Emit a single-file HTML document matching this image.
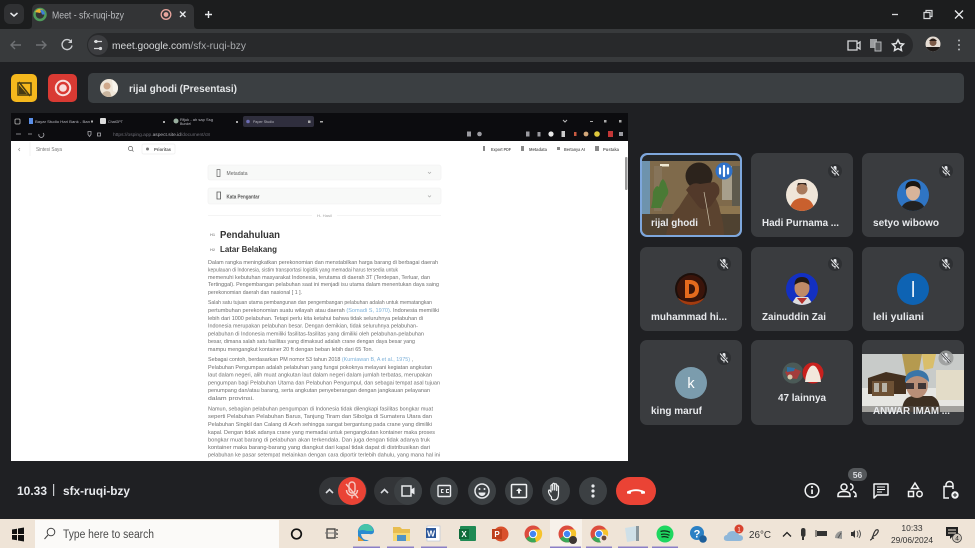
<!DOCTYPE html>
<html><head><meta charset="utf-8"><style>
html,body{margin:0;padding:0;width:975px;height:548px;overflow:hidden;background:#202124}
svg{display:block;filter:blur(.35px)}
text{font-family:"Liberation Sans",sans-serif}
.d{font-size:5.3px;fill:#6e6e6e}
.n{font-size:10.5px;font-weight:700;fill:#e8eaed}
</style></head><body>
<svg width="975" height="548" viewBox="0 0 975 548" xmlns="http://www.w3.org/2000/svg">
<defs>
<symbol id="mo" viewBox="0 0 24 24"><path d="M9 5a3 3 0 0 1 6 0v6a3 3 0 0 1-6 0z" fill="#e8eaed"/><path d="M6 11a6 6 0 0 0 12 0M12 17v4" fill="none" stroke="#e8eaed" stroke-width="2"/><path d="M4 3l16 18" stroke="#2d2f31" stroke-width="4.500"/><path d="M4 3l16 18" stroke="#e8eaed" stroke-width="2"/></symbol>
<clipPath id="c1"><rect x="642" y="155" width="98" height="80" rx="6"/></clipPath>
<clipPath id="a1"><circle cx="802" cy="195" r="16"/></clipPath>
<clipPath id="a2"><circle cx="913" cy="195" r="16"/></clipPath>
<clipPath id="a3"><circle cx="691" cy="289" r="16"/></clipPath>
<clipPath id="a4"><circle cx="802" cy="289" r="16"/></clipPath>
<clipPath id="a5"><circle cx="109" cy="88" r="9"/></clipPath>
<clipPath id="a6"><circle cx="933" cy="44" r="7.500"/></clipPath>
<clipPath id="a7"><rect x="862" y="354" width="102" height="58"/></clipPath>
</defs>

<!-- browser chrome -->
<rect width="975" height="30" fill="#1c1d1e"/>
<rect x="4" y="4" width="20" height="20" rx="6" fill="#303133"/>
<path d="M10.500 13l3.500 3 3.500-3" fill="none" stroke="#e8eaed" stroke-width="1.500"/>
<path d="M28 29q4 0 4-4V10q0-6 6-6h150q6 0 6 6v15q0 4 4 4z" fill="#333436"/>
<circle cx="40" cy="14.500" r="5.500" fill="none" stroke="#4f9a5b" stroke-width="2.500"/>
<path d="M35 12a5.500 5.500 0 0 1 6-3l2 1-3 3z" fill="#e9b32e"/><path d="M40 9.500a5 5 0 0 1 5 5h-3z" fill="#3f7fd6"/>
<text x="52" y="18.500" font-size="10" fill="#b9bbbe" textLength="72" lengthAdjust="spacingAndGlyphs">Meet - sfx-ruqi-bzy</text>
<circle cx="166" cy="14.500" r="4.800" fill="none" stroke="#e8a59d" stroke-width="1.300"/><circle cx="166" cy="14.500" r="2.400" fill="#e8a59d"/>
<path d="M180 11.500l5.500 5.500M185.500 11.500L180 17M205 14.500h7M208.500 11v7" stroke="#e8eaed" stroke-width="1.400"/>
<path d="M0 29h975v33H0z" fill="#383a3c"/>
<rect x="87" y="33" width="826" height="24" rx="12" fill="#28292b"/>
<path d="M11 45h10M15 41l-4 4 4 4M36 45h10M42 41l4 4-4 4" fill="none" stroke="#6f7174" stroke-width="1.400"/>
<path d="M71 41.500a5 5 0 1 0 1 4" fill="none" stroke="#c9cbce" stroke-width="1.400"/><path d="M72 39v4h-4z" fill="#c9cbce"/>
<circle cx="98" cy="45" r="10" fill="#3c3d40"/>
<path d="M94 41.500h8M94 48.500h8" stroke="#d6d8da" stroke-width="1.300"/><circle cx="96" cy="41.500" r="1.600" fill="#d6d8da"/><circle cx="100.500" cy="48.500" r="1.600" fill="#d6d8da"/>
<text x="112" y="49" font-size="10.500" fill="#d6d8da" textLength="134" lengthAdjust="spacingAndGlyphs">meet.google.com<tspan fill="#a9abae">/sfx-ruqi-bzy</tspan></text>
<path d="M892 14.500h6" stroke="#d6d8da" stroke-width="1.300"/>
<path d="M924 12.500h6v6h-6zM926 12.500v-2h6v6h-2" fill="none" stroke="#d6d8da" stroke-width="1.200"/>
<path d="M955 10.500l8 8M963 10.500l-8 8" stroke="#e8eaed" stroke-width="1.300"/>
<path d="M848 41h9v9h-9zM857 44l3-2v7l-3-2" fill="none" stroke="#d6d8da" stroke-width="1.300"/>
<path d="M870 39h7v9h-7z" fill="#9a9c9f"/><path d="M875 42h6v9h-6z" fill="#55575a" stroke="#b5b7ba"/>
<path d="M898 40l1.800 3.500 3.700.5-2.700 2.700.7 3.800-3.500-1.900-3.500 1.900.7-3.800-2.700-2.700 3.700-.5z" fill="none" stroke="#e0e2e4" stroke-width="1.500"/>
<circle cx="933" cy="44" r="7.500" fill="#e5dcd3"/><g clip-path="url(#a6)"><circle cx="933" cy="42.500" r="3.500" fill="#7c5a47"/><rect x="926" y="47" width="14" height="5" fill="#1f1a18"/><path d="M929 41q4-5 8 0" fill="#2a1c16"/></g>
<g fill="#b5b7ba"><circle cx="959" cy="40.500" r="1"/><circle cx="959" cy="45" r="1"/><circle cx="959" cy="49.500" r="1"/></g>

<!-- meet bg -->
<rect y="62" width="975" height="457" fill="#1f2023"/>
<rect x="11" y="74" width="26" height="28" rx="5" fill="#f5b81d"/>
<path d="M18 83h13v12H18zM19 82l11 14" fill="none" stroke="#453a13" stroke-width="1.500"/><path d="M19 85l8 9h-8z" fill="#453a13"/>
<rect x="48" y="74" width="29" height="28" rx="5" fill="#d93a33"/>
<circle cx="63" cy="88" r="7.200" fill="none" stroke="#f8dfdc" stroke-width="2"/><circle cx="63" cy="88" r="3.800" fill="#f8dfdc"/>
<rect x="88" y="73" width="876" height="30" rx="5" fill="#3b3f42"/>
<circle cx="109" cy="88" r="9" fill="#efe6d9"/><g clip-path="url(#a5)"><circle cx="107" cy="86" r="3.500" fill="#cfa88b"/><path d="M100 97q4-8 10-5l2 6z" fill="#c9b59f"/><path d="M112 79l6 6v8l-5-2z" fill="#f8f4ec"/></g>
<text x="129" y="92" font-size="10" font-weight="700" fill="#e4e6e8" textLength="108" lengthAdjust="spacingAndGlyphs">rijal ghodi (Presentasi)</text>

<!-- shared screen -->
<rect x="11" y="113" width="617" height="28" fill="#0c0c0f"/>
<rect x="243" y="116" width="71" height="11" rx="2" fill="#2f2e3d"/>
<g fill="#b9b9c0" font-size="3.800">
<text x="35" y="123" textLength="55" lengthAdjust="spacingAndGlyphs">Bayar Studio Hari Bank - Ban</text>
<text x="108" y="123" textLength="15" lengthAdjust="spacingAndGlyphs">ChatGPT</text>
<text x="180" y="121" textLength="33" lengthAdjust="spacingAndGlyphs">Rfjuk - ah sap Ssg</text>
<text x="180" y="125" textLength="11" lengthAdjust="spacingAndGlyphs">Bundel</text>
<text x="253" y="123" textLength="21" lengthAdjust="spacingAndGlyphs">Paper Studio</text>
</g>
<rect x="15" y="119" width="5" height="5" rx="1" fill="none" stroke="#bbb" stroke-width=".8"/>
<rect x="29" y="118" width="4" height="6" fill="#5b8fe8"/><rect x="100" y="118" width="6" height="6" rx="1" fill="#ddd"/><circle cx="176" cy="121" r="2.500" fill="#9ab0a0"/><circle cx="248" cy="121.500" r="1.800" fill="#6d6db5"/>
<g fill="#aaa"><rect x="91" y="120.500" width="2" height="2"/><rect x="163" y="121" width="2" height="2"/><rect x="236" y="121" width="2" height="2"/><rect x="308" y="120.500" width="2.500" height="2.500"/><rect x="320" y="121" width="3" height="1.500"/><rect x="590" y="121" width="3" height="1"/><rect x="604" y="120" width="2.500" height="2.500"/><rect x="619" y="120" width="2.500" height="2.500"/></g>
<path d="M563 120l2 2 2-2" stroke="#bbb" fill="none"/>
<g stroke="#a8a8ad" stroke-width=".8" fill="none"><path d="M16 134h5M32 134h-4M39 134a2.500 2.500 0 1 0 4-1"/><path d="M88 131.500h3v3l-1.500 2-1.500-2z"/><rect x="97.500" y="133" width="3" height="3"/></g>
<text x="113" y="136" font-size="4.600" fill="#6e6e77" textLength="97" lengthAdjust="spacingAndGlyphs">https://osping.app.<tspan fill="#b0b0b6">aspect.site.id</tspan>/document/c8</text>
<g fill="#9b9ba1"><rect x="467" y="131.500" width="4" height="5"/><circle cx="479.500" cy="134" r="2.300"/><rect x="526" y="131.500" width="3.500" height="5"/><rect x="537.500" y="132" width="3" height="4.500"/><circle cx="551" cy="134" r="2.600" fill="#e8e8e8"/><rect x="561.500" y="131" width="3.500" height="6" fill="#ccc"/><rect x="574" y="132" width="2.500" height="4" fill="#c95a40"/><circle cx="586" cy="134" r="2.400" fill="#d4a87a"/><circle cx="597" cy="134" r="2.800" fill="#e0c83c"/><rect x="608" y="131" width="5" height="6" fill="#c23636"/><rect x="619" y="132" width="4" height="4"/></g>

<rect x="11" y="141" width="617" height="320" fill="#fff"/>
<rect x="625" y="157" width="2.500" height="33" rx="1" fill="#9a9a9a"/>
<path d="M20 148l-1.500 1.500L20 151" stroke="#999" stroke-width=".7" fill="none"/>
<path d="M30 142v14" stroke="#eee" stroke-width=".7"/>
<text x="36" y="151" font-size="5.600" fill="#777" textLength="26" lengthAdjust="spacingAndGlyphs">Sintesi Saya</text>
<circle cx="130.500" cy="148.500" r="2.100" fill="none" stroke="#666" stroke-width=".7"/><path d="M132 150l1.500 1.500" stroke="#666" stroke-width=".7"/>
<rect x="142" y="144" width="33" height="10" rx="1.500" fill="#fff" stroke="#eee" stroke-width=".7"/>
<circle cx="147.500" cy="149" r="1.500" fill="#777"/><text x="154" y="151" font-size="4.600" font-weight="700" fill="#555" textLength="17" lengthAdjust="spacingAndGlyphs">Prioritas</text>
<g fill="#666" font-size="4.600" font-weight="700">
<text x="491" y="151" textLength="20" lengthAdjust="spacingAndGlyphs">Export PDF</text>
<text x="529" y="151" textLength="18" lengthAdjust="spacingAndGlyphs">Metadata</text>
<text x="564" y="151" textLength="21" lengthAdjust="spacingAndGlyphs">Bertanya AI</text>
<text x="603" y="151" textLength="16" lengthAdjust="spacingAndGlyphs">Pustaka</text>
</g>
<g fill="#888"><rect x="483" y="146" width="2" height="5"/><rect x="521" y="146" width="3" height="5"/><rect x="557" y="147" width="3" height="3"/><rect x="595" y="146" width="4" height="5"/></g>

<rect x="208" y="165" width="233" height="15" rx="2" fill="#f8f9f8" stroke="#f0f0f0" stroke-width=".6"/>
<rect x="208" y="188" width="233" height="16" rx="2" fill="#f8f9f8" stroke="#f0f0f0" stroke-width=".6"/>
<path d="M217 169.500h3v7h-3z" fill="none" stroke="#666" stroke-width=".7"/><path d="M217 192h3.500v7H217z" fill="none" stroke="#555" stroke-width=".8"/>
<text x="226.500" y="175" font-size="5.200" fill="#666" textLength="21" lengthAdjust="spacingAndGlyphs">Metadata</text>
<text x="226.500" y="198.500" font-size="5.200" fill="#555" font-weight="700" textLength="33" lengthAdjust="spacingAndGlyphs">Kata Pengantar</text>
<path d="M428 172l1.500 1.500L431 172M428 195.500l1.500 1.500 1.500-1.500" stroke="#aaa" fill="none" stroke-width=".7"/>
<path d="M208 215.500h104M337 215.500h104" stroke="#f1f1f1" stroke-width=".7"/><text x="317" y="217" font-size="3.800" fill="#a5a5a5" textLength="15" lengthAdjust="spacingAndGlyphs">H- Hasil</text>
<text x="210" y="236" font-size="4" fill="#999" font-weight="700">H1</text>
<text x="210" y="251" font-size="4" fill="#999" font-weight="700">H2</text>
<text x="220" y="238" font-size="10.500" font-weight="700" fill="#333" textLength="60" lengthAdjust="spacingAndGlyphs">Pendahuluan</text>
<text x="220" y="252" font-size="8.500" font-weight="700" fill="#333" textLength="57" lengthAdjust="spacingAndGlyphs">Latar Belakang</text>
<text class="d" x="208" y="264" textLength="230" lengthAdjust="spacingAndGlyphs">Dalam rangka meningkatkan perekonomian dan menstabilkan harga barang di berbagai daerah</text>
<text class="d" x="208" y="271.500" textLength="190" lengthAdjust="spacingAndGlyphs">kepulauan di Indonesia, sistim transportasi logistik yang memadai harus tersedia untuk</text>
<text class="d" x="208" y="279" textLength="222" lengthAdjust="spacingAndGlyphs">memenuhi kebutuhan masyarakat Indonesia, terutama di daerah 3T (Terdepan, Terluar, dan</text>
<text class="d" x="208" y="286" textLength="231" lengthAdjust="spacingAndGlyphs">Tertinggal). Pengembangan pelabuhan saat ini menjadi isu utama dalam menentukan daya saing</text>
<text class="d" x="208" y="294" textLength="94" lengthAdjust="spacingAndGlyphs">perekonomian daerah dan nasional [ 1 ].</text>
<text class="d" x="208" y="304" textLength="224" lengthAdjust="spacingAndGlyphs">Salah satu tujuan utama pembangunan dan pengembangan pelabuhan adalah untuk mematangkan</text>
<text class="d" x="208" y="312" textLength="231" lengthAdjust="spacingAndGlyphs">pertumbuhan perekonomian suatu wilayah atau daerah <tspan fill="#7cb0d8">(Somadi S, 1970)</tspan>. Indonesia memiliki</text>
<text class="d" x="208" y="320" textLength="215" lengthAdjust="spacingAndGlyphs">lebih dari 1000 pelabuhan. Tetapi perlu kita ketahui bahwa tidak seluruhnya pelabuhan di</text>
<text class="d" x="208" y="327.500" textLength="210" lengthAdjust="spacingAndGlyphs">Indonesia merupakan pelabuhan besar. Dengan demikian, tidak seluruhnya pelabuhan-</text>
<text class="d" x="208" y="335.500" textLength="216" lengthAdjust="spacingAndGlyphs">pelabuhan di Indonesia memiliki fasilitas-fasilitas yang dimiliki oleh pelabuhan-pelabuhan</text>
<text class="d" x="208" y="343" textLength="207" lengthAdjust="spacingAndGlyphs">besar, dimana salah satu fasilitas yang dimaksud adalah crane dengan daya besar yang</text>
<text class="d" x="208" y="351" textLength="165" lengthAdjust="spacingAndGlyphs">mampu mengangkut kontainer 20 ft dengan beban lebih dari 65 Ton.</text>
<text class="d" x="208" y="361" textLength="205" lengthAdjust="spacingAndGlyphs">Sebagai contoh, berdasarkan PM nomor 53 tahun 2018 <tspan fill="#7cb0d8">(Kurniawan B, A et al., 1975)</tspan> ,</text>
<text class="d" x="208" y="369" textLength="224" lengthAdjust="spacingAndGlyphs">Pelabuhan Pengumpan adalah pelabuhan yang fungsi pokoknya melayani kegiatan angkutan</text>
<text class="d" x="208" y="376.500" textLength="224" lengthAdjust="spacingAndGlyphs">laut dalam negeri, alih muat angkutan laut dalam negeri dalam jumlah terbatas, merupakan</text>
<text class="d" x="208" y="384.500" textLength="232" lengthAdjust="spacingAndGlyphs">pengumpan bagi Pelabuhan Utama dan Pelabuhan Pengumpul, dan sebagai tempat asal tujuan</text>
<text class="d" x="208" y="392" textLength="222" lengthAdjust="spacingAndGlyphs">penumpang dan/atau barang, serta angkutan penyeberangan dengan jangkauan pelayanan</text>
<text class="d" x="208" y="400" textLength="46" lengthAdjust="spacingAndGlyphs">dalam provinsi.</text>
<text class="d" x="208" y="410.500" textLength="225" lengthAdjust="spacingAndGlyphs">Namun, sebagian pelabuhan pengumpan di Indonesia tidak dilengkapi fasilitas bongkar muat</text>
<text class="d" x="208" y="418" textLength="224" lengthAdjust="spacingAndGlyphs">seperti Pelabuhan Pelabuhan Barus, Tanjung Tiram dan Sibolga di Sumatera Utara dan</text>
<text class="d" x="208" y="426" textLength="224" lengthAdjust="spacingAndGlyphs">Pelabuhan Singkil dan Calang di Aceh sehingga sangat bergantung pada crane yang dimiliki</text>
<text class="d" x="208" y="434" textLength="227" lengthAdjust="spacingAndGlyphs">kapal. Dengan tidak adanya crane yang memadai untuk pengangkutan kontainer maka proses</text>
<text class="d" x="208" y="441.500" textLength="222" lengthAdjust="spacingAndGlyphs">bongkar muat barang di pelabuhan akan terkendala. Dan juga dengan tidak adanya truk</text>
<text class="d" x="208" y="449" textLength="222" lengthAdjust="spacingAndGlyphs">kontainer maka barang-barang yang diangkut dari kapal tidak dapat di distribusikan dari</text>
<text class="d" x="208" y="456.500" textLength="232" lengthAdjust="spacingAndGlyphs">pelabuhan ke pasar setempat melainkan dengan cara diportir terlebih dahulu, yang mana hal ini</text>

<!-- tiles -->
<g fill="#3a3c3f">
<rect x="751" y="153" width="102" height="84" rx="7"/><rect x="862" y="153" width="102" height="84" rx="7"/>
<rect x="640" y="247" width="102" height="84" rx="7"/><rect x="751" y="247" width="102" height="84" rx="7"/><rect x="862" y="247" width="102" height="84" rx="7"/>
<rect x="640" y="340" width="102" height="85" rx="7"/><rect x="751" y="340" width="102" height="85" rx="7"/><rect x="862" y="340" width="102" height="85" rx="7"/>
</g>
<!-- tile 1 video -->
<rect x="640" y="153" width="102" height="84" rx="7" fill="#7ea7dc"/>
<g clip-path="url(#c1)">
<rect x="642" y="155" width="98" height="80" fill="#7f6a4b"/>
<rect x="642" y="155" width="98" height="6" fill="#25282a"/>
<rect x="642" y="161" width="8" height="60" fill="#6e93ad"/>
<rect x="660" y="164" width="9" height="2.500" fill="#efe9d4"/>
<rect x="654" y="166" width="8" height="45" fill="#86745a"/>
<path d="M651 208q2-8 2-16q3-8 6-5q1-6 4-8q3 3 4 8q3 6-1 10q-3 5-5 11z" fill="#4a7a35"/>
<rect x="722" y="166" width="12" height="34" fill="#a79f8c"/>
<rect x="732" y="166" width="8" height="50" fill="#5e5a4d"/>
<rect x="716" y="206" width="24" height="8" fill="#8d7650"/>
<rect x="642" y="214" width="98" height="21" fill="#4f4231"/>
<path d="M666 235q3-18 13-28q6-10 12-18h18q10 12 11 22q4 12 4 24z" fill="#5b432f"/>
<circle cx="699" cy="176" r="13.500" fill="#2c231c"/>
<path d="M686 190q6-9 14-6l14-2q7 3 5 12l-8 12q-8 6-13 0z" fill="#52392a"/>
<path d="M704 192q3 16 6 34" stroke="#c9bfa8" stroke-width=".7" fill="none"/>
</g>
<circle cx="724" cy="171" r="8.500" fill="#2f71c9"/><path d="M720 168.500v5M724 166v10M728 168.500v5" stroke="#fff" stroke-width="2.200" stroke-linecap="round"/>
<!-- mute icons -->
<g fill="#2e3033"><circle cx="835" cy="171" r="7"/><circle cx="946" cy="171" r="7"/><circle cx="724" cy="264" r="7"/><circle cx="835" cy="264" r="7"/><circle cx="946" cy="264" r="7"/><circle cx="724" cy="358" r="7"/></g>
<use href="#mo" x="829" y="165" width="12" height="12"/><use href="#mo" x="940" y="165" width="12" height="12"/>
<use href="#mo" x="718" y="258" width="12" height="12"/><use href="#mo" x="829" y="258" width="12" height="12"/><use href="#mo" x="940" y="258" width="12" height="12"/><use href="#mo" x="718" y="352" width="12" height="12"/>
<!-- avatars -->
<circle cx="802" cy="195" r="16" fill="#efe5d8"/><g clip-path="url(#a1)"><circle cx="802" cy="189" r="5.500" fill="#a87a5c"/><path d="M797 186q5-4 10 0l-1-3h-8z" fill="#33261f"/><path d="M789 212q2-14 13-14t13 14z" fill="#c9602e"/></g>
<circle cx="913" cy="195" r="16" fill="#2f75c4"/><g clip-path="url(#a2)"><ellipse cx="913" cy="192" rx="7" ry="8.500" fill="#d8b49a"/><path d="M905.500 190q-1-9 7.500-9t7.500 9q-3-4-7.500-4t-7.500 4z" fill="#1a1612"/><path d="M900 212q2-11 13-11t13 11z" fill="#222"/></g>
<circle cx="691" cy="289" r="16" fill="#1d0f0a"/><g clip-path="url(#a3)"><circle cx="691" cy="289" r="14" fill="#3a140a"/><path d="M685 280h6q8 1 8 9t-8 9h-6zM689 284v10q6 0 6-5t-6-5z" fill="#e56a1d" fill-rule="evenodd"/><path d="M678 298q13 8 26 0v8h-26z" fill="#a33c10"/></g>
<circle cx="802" cy="289" r="16" fill="#1330c2"/><g clip-path="url(#a4)"><ellipse cx="802" cy="288" rx="7.500" ry="9" fill="#c08b67"/><path d="M794.500 285q0-8 7.500-8t7.500 8q-4-3-7.500-3t-7.500 3z" fill="#221a15"/><path d="M790 306l6-9h12l6 9z" fill="#ddd"/><path d="M797 298l5 6 5-6z" fill="#b5312c"/></g>
<circle cx="913" cy="289" r="16" fill="#0e63b3"/><rect x="912.200" y="281" width="1.800" height="16" fill="#e3eef8"/>
<circle cx="691" cy="383" r="16" fill="#7b9cad"/><text x="691" y="388" font-size="14.500" fill="#fff" text-anchor="middle">k</text>
<circle cx="793" cy="373" r="10.500" fill="#4b5a57"/><path d="M785 372l8-4 8 3-4 8-9-1z" fill="#a33c3c"/><path d="M787 367l8 1-1 3-7 1z" fill="#2f6fa2"/><circle cx="790" cy="377" r="2.500" fill="#d7c6a9"/>
<circle cx="813" cy="373" r="11" fill="#3a3c3f"/><circle cx="813" cy="373" r="10.500" fill="#c9201d"/><path d="M805 382q1-10 5-15q3-3 6 0q4 5 5 15z" fill="#f2e7dc"/>
<!-- anwar video -->
<g clip-path="url(#a7)">
<rect x="862" y="354" width="102" height="58" fill="#c8cbc9"/>
<rect x="862" y="388" width="102" height="24" fill="#e6e6e2"/>
<path d="M902 354h20l-4 22h-12z" fill="#b59a4f"/>
<path d="M922 354h14l-3 14-9 2z" fill="#d9be6a"/>
<path d="M868 378l18-6 20 4v18h-38z" fill="#43301f"/>
<rect x="872" y="381" width="22" height="15" fill="#6d5135"/><rect x="874" y="383" width="5" height="9" fill="#b7b3a8"/><rect x="882" y="383" width="5" height="9" fill="#b7b3a8"/>
<rect x="936" y="370" width="28" height="30" fill="#e3dcc8"/>
<path d="M902 412q0-14 10-16h20q8 3 8 16z" fill="#3d2f22"/>
<ellipse cx="917" cy="385" rx="11" ry="13" fill="#b98f78"/>
<path d="M905 383q-1-12 13-13q11 1 11 12q-6-6-12-6t-12 7z" fill="#3a75a8"/>
<path d="M906 383h8v6h-8zM918 383h8v6h-8z" fill="#3e3536"/>
<path d="M862 406h102v6H862z" fill="#5e5c58" opacity=".5"/>
</g>
<circle cx="946" cy="358" r="7.500" fill="#9a9c9b" opacity=".85"/><use href="#mo" x="940" y="352" width="12" height="12"/>
<!-- names -->
<text class="n" x="651" y="226" textLength="47" lengthAdjust="spacingAndGlyphs">rijal ghodi</text>
<text class="n" x="762" y="226" textLength="77" lengthAdjust="spacingAndGlyphs">Hadi Purnama ...</text>
<text class="n" x="873" y="226" textLength="66" lengthAdjust="spacingAndGlyphs">setyo wibowo</text>
<text class="n" x="651" y="320" textLength="76" lengthAdjust="spacingAndGlyphs">muhammad hi...</text>
<text class="n" x="762" y="320" textLength="64" lengthAdjust="spacingAndGlyphs">Zainuddin Zai</text>
<text class="n" x="873" y="320" textLength="51" lengthAdjust="spacingAndGlyphs">leli yuliani</text>
<text class="n" x="651" y="414" textLength="51" lengthAdjust="spacingAndGlyphs">king maruf</text>
<text class="n" x="778" y="401" textLength="48" lengthAdjust="spacingAndGlyphs">47 lainnya</text>
<text class="n" x="873" y="414" textLength="77" lengthAdjust="spacingAndGlyphs">ANWAR IMAM ...</text>

<!-- bottom bar -->
<text x="17" y="495" font-size="11.500" font-weight="700" fill="#e8eaed" textLength="30" lengthAdjust="spacingAndGlyphs">10.33</text>
<rect x="53" y="484" width="1.200" height="12" fill="#c9cbce"/>
<text x="63" y="495" font-size="11.500" font-weight="700" fill="#e8eaed" textLength="67" lengthAdjust="spacingAndGlyphs">sfx-ruqi-bzy</text>
<rect x="319" y="477" width="48" height="28" rx="14" fill="#333538"/>
<circle cx="352" cy="491" r="14" fill="#ea4335"/>
<path d="M349 485a3 3 0 0 1 6 0v5a3 3 0 0 1-6 0zM346.500 490a5.500 5.500 0 0 0 11 0M352 496v2.500" fill="none" stroke="#f6c9c3" stroke-width="1.400"/><path d="M346 484l12 14" stroke="#f6c9c3" stroke-width="1.400"/>
<rect x="374" y="477" width="48" height="28" rx="14" fill="#333538"/>
<path d="M326 493l3.500-3.500 3.500 3.500M381 493l3.500-3.500 3.500 3.500" fill="none" stroke="#dadce0" stroke-width="1.600"/>
<circle cx="408" cy="491" r="14" fill="#3c4043"/>
<path d="M402 486h9v10h-9z" fill="none" stroke="#e8eaed" stroke-width="1.500"/><path d="M411 489.500l3.500-2v7l-3.500-2z" fill="#e8eaed"/>
<g fill="#3c4043"><circle cx="444" cy="491" r="14"/><circle cx="482" cy="491" r="14"/><circle cx="519" cy="491" r="14"/><circle cx="556" cy="491" r="14"/><circle cx="593" cy="491" r="14"/></g>
<rect x="438" y="485.500" width="12.500" height="11" rx="1" fill="none" stroke="#e8eaed" stroke-width="1.400"/>
<path d="M443.500 489.500h-2v3h2M449 489.500h-2.500v3h2.500" fill="none" stroke="#e8eaed" stroke-width="1.100"/>
<circle cx="482" cy="491" r="7" fill="none" stroke="#e8eaed" stroke-width="1.500"/><circle cx="479.500" cy="489" r="1" fill="#e8eaed"/><circle cx="484.500" cy="489" r="1" fill="#e8eaed"/><path d="M478.500 492.500a3.500 3.500 0 0 0 7 0z" fill="#e8eaed"/>
<rect x="511.500" y="484.500" width="15" height="13" rx="1" fill="none" stroke="#f1f3f4" stroke-width="1.500"/><path d="M519 488l3 3h-2v2.500h-2V491h-2z" fill="#f1f3f4"/>
<path d="M551.500 497q-3-3-3-6l.5-1q1 0 2 2v-6.500q1-1.500 1.700 0V490v-6q1-1.500 2 0v6-5.500q1-1.500 2 0v6-4q1-1.500 1.800 0v7q0 6-3.500 6.500h-1.500q-1.500-.5-2-1z" fill="none" stroke="#f1f3f4" stroke-width="1.200" stroke-linejoin="round"/>
<g fill="#e8eaed"><circle cx="593" cy="486" r="1.600"/><circle cx="593" cy="491" r="1.600"/><circle cx="593" cy="496" r="1.600"/></g>
<rect x="616" y="477" width="40" height="28" rx="14" fill="#ea4335"/>
<path d="M627 493.500v-2q9-4.500 18 0v2l-3.500.5-.8-2.300q-4.700-1.200-9.400 0l-.8 2.300z" fill="#fff"/>
<circle cx="812" cy="490.500" r="6.800" fill="none" stroke="#f1f3f4" stroke-width="1.500"/><rect x="811.200" y="489.500" width="1.700" height="4.500" fill="#f1f3f4"/><circle cx="812" cy="487" r="1.100" fill="#f1f3f4"/>
<rect x="848" y="468" width="19" height="13" rx="6.500" fill="#55585b"/><text x="857.500" y="478" font-size="8.500" font-weight="700" fill="#dadce0" text-anchor="middle">56</text>
<circle cx="844" cy="487" r="3" fill="none" stroke="#f1f3f4" stroke-width="1.500"/><path d="M838 496.500v-1.500q0-3.500 6-3.500t6 3.500v1.500z" fill="none" stroke="#f1f3f4" stroke-width="1.500"/><path d="M850 484a3 3 0 0 1 0 6M853 491.500q3 1 3 3.500v1.500h-2" fill="none" stroke="#f1f3f4" stroke-width="1.500"/>
<path d="M874 484h14v11h-11l-3 3z" fill="none" stroke="#f1f3f4" stroke-width="1.500" stroke-linejoin="round"/><path d="M877 487h8M877 489.500h8M877 492h5" stroke="#f1f3f4" stroke-width="1.100"/>
<path d="M915 483l3.500 5.500h-7z" fill="none" stroke="#f1f3f4" stroke-width="1.500"/><rect x="908.500" y="491.500" width="5" height="5" fill="none" stroke="#f1f3f4" stroke-width="1.500"/><circle cx="919.500" cy="494" r="2.700" fill="none" stroke="#f1f3f4" stroke-width="1.500"/>
<path d="M946 486v-1a3.500 3.500 0 0 1 7 0v1" fill="none" stroke="#f1f3f4" stroke-width="1.500"/><path d="M953 489v-2.500h-9V498h5" fill="none" stroke="#f1f3f4" stroke-width="1.500"/><circle cx="955" cy="495" r="3.700" fill="#f1f3f4"/><path d="M955 493v4M953 495h4" stroke="#202124"/>

<!-- taskbar -->
<rect y="519" width="975" height="29" fill="#efe4d7"/>
<path d="M12 529.500l5-.8v5.300h-5zM18 528.500l6-1v6.500h-6zM12 535h5v5.300l-5-.8zM18 535h6v6.500l-6-1z" fill="#111"/>
<rect x="35" y="520" width="244" height="28" fill="#fbfaf8"/>
<circle cx="51" cy="532" r="3.800" fill="none" stroke="#444" stroke-width="1"/><path d="M48 535l-3.500 4" stroke="#444" stroke-width="1"/>
<text x="63" y="538" font-size="11.500" fill="#4a4a4a" textLength="91" lengthAdjust="spacingAndGlyphs">Type here to search</text>
<circle cx="296.500" cy="534" r="4.800" fill="none" stroke="#111" stroke-width="1.700"/>
<path d="M327 529h8v9h-8zM337 529v2M337 533v2M337 537v1" fill="none" stroke="#333" stroke-width="1.200"/><path d="M325 533h12" stroke="#777"/>
<path d="M358 533a8 8 0 0 1 16-2q0 4-5 3h-8q1 6 6 6l2 1h-11z" fill="#2a8bd0"/><path d="M359 531a7 7 0 0 1 14 0h-6q-5-2-8 0z" fill="#45c4a8"/><path d="M358 536l6 5h-6z" fill="#e09a32"/>
<path d="M393 527h7l2 2h8v5h-17z" fill="#e8bd4f"/><rect x="393" y="533" width="17" height="8" fill="#f6d873"/><rect x="397" y="535" width="9" height="6" fill="#4f93c6"/>
<rect x="427" y="526" width="13" height="15" fill="#fff" stroke="#bcc6d8" stroke-width=".7"/><rect x="426" y="528" width="10" height="10" fill="#2b579a"/><text x="431" y="536.500" font-size="8.500" font-weight="700" fill="#fff" text-anchor="middle">W</text>
<rect x="460" y="526" width="16" height="15" rx="1" fill="#1f8a54"/><rect x="459" y="529" width="10" height="10" fill="#0e6b3a"/><text x="464" y="537" font-size="8" font-weight="700" fill="#fff" text-anchor="middle">X</text>
<circle cx="501" cy="534" r="7.500" fill="#d9502c"/><rect x="492" y="529" width="10" height="10" fill="#bf3f1b"/><text x="497" y="537" font-size="8" font-weight="700" fill="#fff" text-anchor="middle">P</text>
<rect x="550" y="519" width="32" height="29" fill="#f7f1ea"/>
<g id="chr"><circle cx="533" cy="534" r="8.500" fill="#dc4c3e"/><path d="M526 538.500a8.500 8.500 0 0 0 10 3.500l3-7h-8z" fill="#3aa757"/><path d="M536 542a8.500 8.500 0 0 0 5-12.500h-8z" fill="#f6c32c"/><circle cx="533" cy="534" r="4.200" fill="#fff"/><circle cx="533" cy="534" r="3.200" fill="#4285f4"/></g>
<use href="#chr" x="34"/><use href="#chr" x="66"/>
<circle cx="573" cy="540" r="4" fill="#3c3533"/><circle cx="604" cy="539" r="4.500" fill="#f0e4da"/><circle cx="604" cy="538" r="2.400" fill="#6b4a3a"/>
<path d="M625 528l12-2 2 14-12 2z" fill="#cfe0e8"/><path d="M636 526h3v15h-3z" fill="#8a979d"/>
<circle cx="665" cy="534" r="8.500" fill="#1ed760"/><path d="M660.500 531.500q5-1.500 9.500.8M661 534.500q4.500-1.200 8.500.8M661.500 537q3.500-1 7 .6" fill="none" stroke="#0f2b18" stroke-width="1.200"/>
<circle cx="697" cy="533" r="7" fill="#2b80c4"/><text x="697" y="537.500" font-size="11" font-weight="700" fill="#fff" text-anchor="middle">?</text><circle cx="703" cy="539" r="3.800" fill="#1d5f9b"/>
<path d="M727 541q-4-.5-3-4q1-2 3-2q1-4 6-4q5 .5 6 4q4 0 4 3t-4 3z" fill="#8fb7d9"/>
<circle cx="739" cy="529" r="4.500" fill="#d8432f"/><text x="739" y="531.500" font-size="6" fill="#fff" text-anchor="middle">1</text>
<text x="749" y="538" font-size="10.500" fill="#333" textLength="22" lengthAdjust="spacingAndGlyphs">26°C</text>
<path d="M783 536.500l4-4 4 4" fill="none" stroke="#222" stroke-width="1.300"/>
<rect x="801" y="528" width="4.500" height="9" rx="2.200" fill="#333"/><path d="M803 537v3" stroke="#333" stroke-width="2"/>
<path d="M817 531h10v5h-10z" fill="#333"/><path d="M816 530v7" stroke="#333"/>
<path d="M835 538a7 7 0 0 1 7-7v8z" fill="#9a9a98"/><path d="M838 538l3-5" stroke="#555"/>
<path d="M851 532h2l2-2v8l-2-2h-2z" fill="#333"/><path d="M857 531q2 3 0 6M859 530q3 4 0 8" fill="none" stroke="#555"/>
<path d="M870 540q2 0 3-4t3-6q3-1 2 2q-2 4-5 4q-2 3 1 2" fill="none" stroke="#333" stroke-width="1.200"/>
<text x="912" y="531" font-size="8.500" fill="#333" text-anchor="middle">10:33</text>
<text x="912" y="543" font-size="8.500" fill="#333" text-anchor="middle" textLength="42" lengthAdjust="spacingAndGlyphs">29/06/2024</text>
<path d="M946 527h12v9h-5l-3 3v-3h-4z" fill="#222"/><path d="M948 530h8M948 533h8" stroke="#efe4d7"/>
<circle cx="957" cy="538" r="4.500" fill="#cfc6bb" stroke="#333" stroke-width=".7"/><text x="957" y="540.500" font-size="6.500" fill="#222" text-anchor="middle">4</text>
<g fill="#8b7fc7"><rect x="353" y="546.500" width="27" height="1.500"/><rect x="387" y="546.500" width="27" height="1.500"/><rect x="421" y="546.500" width="26" height="1.500"/><rect x="550" y="546.500" width="31" height="1.500"/><rect x="586" y="546.500" width="26" height="1.500"/><rect x="618" y="546.500" width="30" height="1.500"/><rect x="652" y="546.500" width="26" height="1.500"/></g>
</svg>
</body></html>
